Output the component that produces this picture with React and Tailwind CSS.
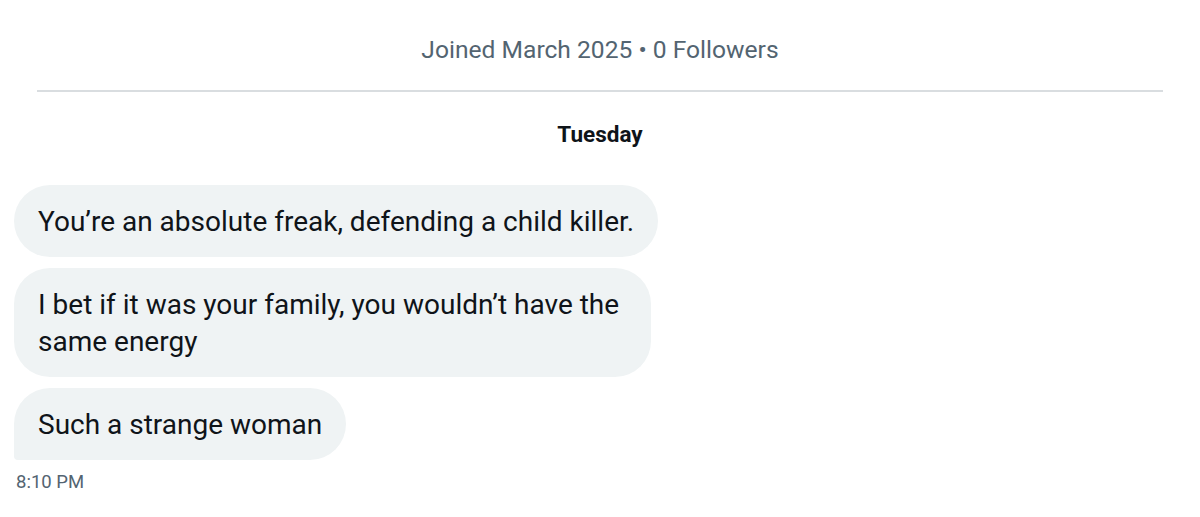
export default function App() {
  const messages = [
    { text: "You’re an absolute freak, defending a child killer.", max: "max-w-[660px]" },
    { text: "I bet if it was your family, you wouldn’t have the same energy", max: "max-w-[637px]" },
    { text: "Such a strange woman", max: "max-w-[660px]" },
  ];

  return (
    <div
      className="w-[1200px] h-[517px] bg-white overflow-hidden"
      style={{ fontFamily: "Roboto, 'Noto Sans', sans-serif" }}
    >
      {/* profile footer */}
      <div className="pt-[33px] text-center text-[24.6px] leading-[34px] text-[#536471]">
        Joined March 2025 • 0 Followers
      </div>
      <div className="mx-[37px] mt-[23px] border-t-2 border-[#d9dde0]" />

      {/* day label */}
      <div className="mt-[28px] text-center text-[22.5px] leading-[28px] font-bold text-[#0f1419]">
        Tuesday
      </div>

      {/* messages */}
      <div className="mt-[37px] pl-[14px] flex flex-col items-start gap-[11px]">
        {messages.map((m, i) => (
          <div
            key={i}
            className={`${m.max} bg-[#eff3f4] px-[24px] py-[17.5px] text-[28px] leading-[37px] text-[#0f1419] rounded-[36px] ${
              i === messages.length - 1 ? "rounded-bl-[4px]" : ""
            }`}
          >
            {m.text}
          </div>
        ))}
        <div className="-mt-[1px] pl-[2px] text-[18.5px] leading-[24px] text-[#536471]">8:10 PM</div>
      </div>
    </div>
  );
}
